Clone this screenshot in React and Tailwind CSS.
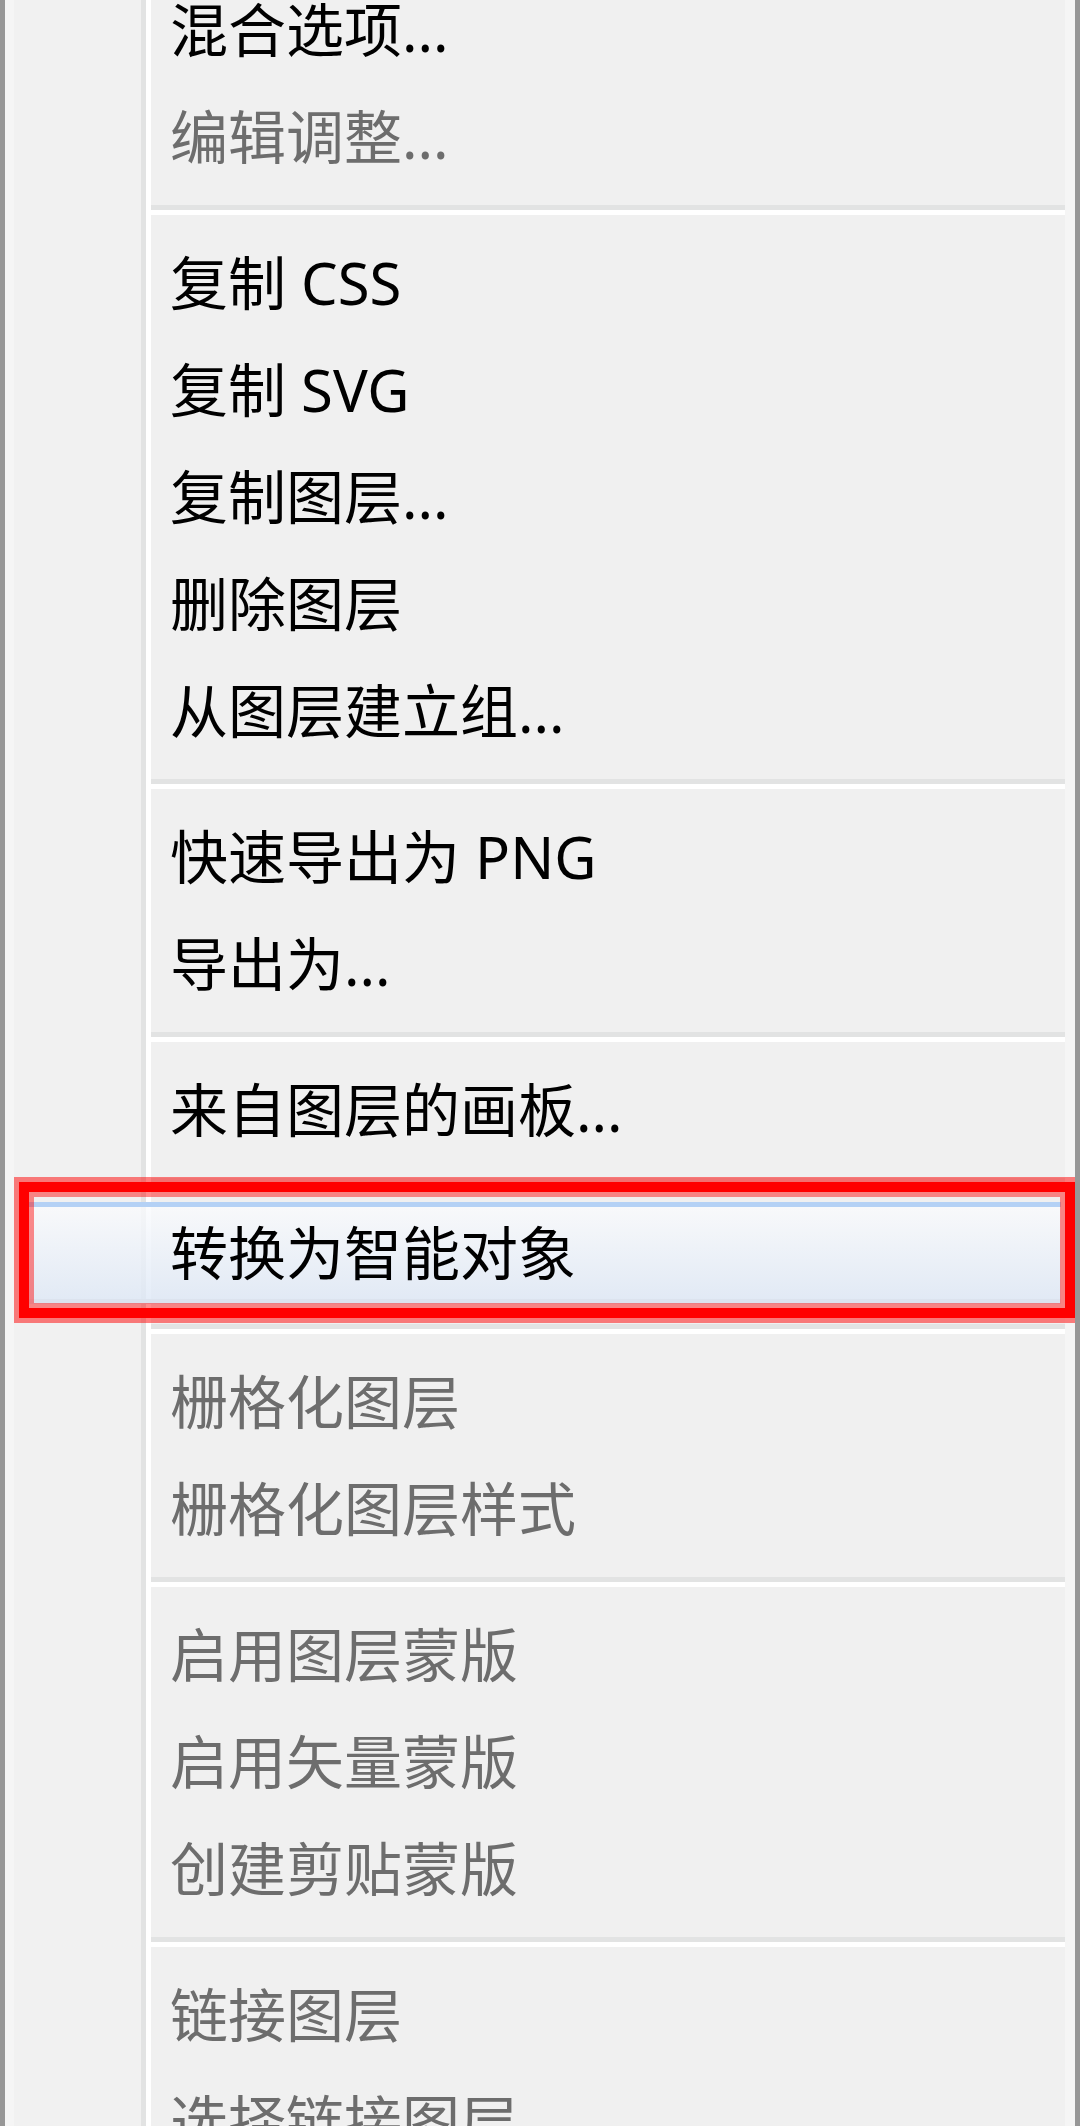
import React from 'react'

// Layer context menu (classic Windows look, drawn large)
const MENU = [
  { label: '混合选项...' },
  { label: '编辑调整...', disabled: true },
  'sep',
  { label: '复制 CSS' },
  { label: '复制 SVG' },
  { label: '复制图层...' },
  { label: '删除图层' },
  { label: '从图层建立组...' },
  'sep',
  { label: '快速导出为 PNG' },
  { label: '导出为...' },
  'sep',
  { label: '来自图层的画板...' },
  'sep',
  { label: '转换为智能对象', active: true },
  'sep',
  { label: '栅格化图层', disabled: true },
  { label: '栅格化图层样式', disabled: true },
  'sep',
  { label: '启用图层蒙版', disabled: true },
  { label: '启用矢量蒙版', disabled: true },
  { label: '创建剪贴蒙版', disabled: true },
  'sep',
  { label: '链接图层', disabled: true },
  { label: '选择链接图层', disabled: true },
]

function Separator() {
  return (
    <div className="h-[39px] flex flex-col justify-center pl-[137px]">
      <div className="h-[5px] bg-[#e2e3e3]" />
      <div className="h-[5px] bg-white" />
    </div>
  )
}

function MenuItem({ label, disabled }) {
  return (
    <div className="h-[107px] flex items-center pl-[156px]">
      <span className={`leading-none whitespace-pre ${disabled ? 'text-[#6d6d6d]' : 'text-black'}`}>{label}</span>
    </div>
  )
}

function ActiveItem({ label }) {
  return (
    <div className="h-[107px] pl-[15px] pr-[4px]">
      <div className="h-[102px] border-t-[5px] border-b-[5px] border-t-[#b4d1f5] border-b-[#dce3ee] bg-[linear-gradient(to_bottom,rgba(250,251,253,0.8),rgba(222,232,246,0.8))] flex items-center pl-[141px]">
        <span className="leading-none whitespace-pre text-black">{label}</span>
      </div>
    </div>
  )
}

export default function App() {
  return (
    <div className="relative w-[1080px] h-[2126px] overflow-hidden flex bg-[#f0f0f0] font-['Noto_Sans','Noto_Sans_CJK_SC',sans-serif] text-[58px]">
      {/* outer frame, left */}
      <div className="w-[5px] bg-[#979797]" />
      <div className="w-[9px] bg-[#f5f5f5]" />

      {/* menu body with icon gutter */}
      <div className="flex-1 bg-[linear-gradient(to_right,#f1f1f1_127px,#e2e3e3_127px,#e2e3e3_132px,#ffffff_132px,#ffffff_137px,#f0f0f0_137px)]">
        <div className="-mt-[24px]">
          {MENU.map((item, i) =>
            item === 'sep' ? (
              <Separator key={i} />
            ) : item.active ? (
              <ActiveItem key={i} label={item.label} />
            ) : (
              <MenuItem key={i} label={item.label} disabled={item.disabled} />
            )
          )}
        </div>
      </div>

      {/* outer frame, right */}
      <div className="w-[10px] bg-[#f5f5f5]" />
      <div className="relative z-10 w-[5px] bg-[#979797]" />

      {/* red callout around the active entry */}
      <div className="absolute left-[14px] top-[1177px] w-[1066px] h-[146px] border-[5px] border-[rgba(255,0,0,0.5)]">
        <div className="h-full border-[10px] border-[#ff0000]">
          <div className="h-full border-[5px] border-[rgba(255,0,0,0.45)]" />
        </div>
      </div>
    </div>
  )
}
